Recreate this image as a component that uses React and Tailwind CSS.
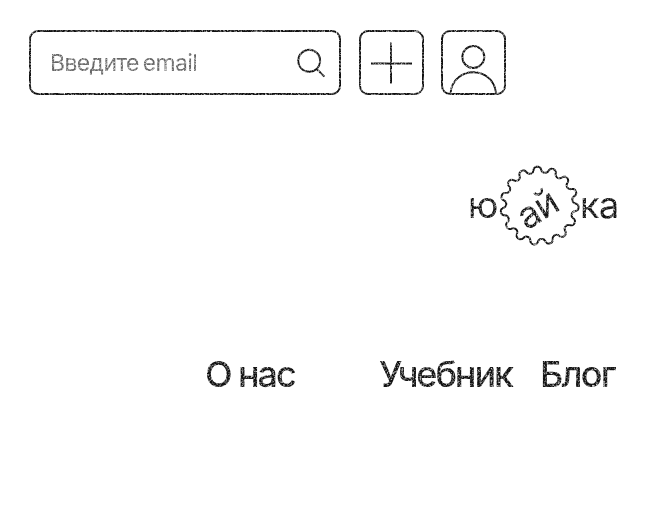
const TEETH = 15;

// Closed wavy outline of the cog badge.
function cogPath(cx, cy, radius, depth, phase) {
  const points = [];
  const steps = 600;
  for (let i = 0; i < steps; i++) {
    const t = (i / steps) * Math.PI * 2;
    const w = TEETH * (t - phase);
    const r = radius + depth * Math.cos(w);
    const a = t + 0.018 * Math.sin(w * 2);
    points.push(`${(cx + r * Math.cos(a)).toFixed(2)} ${(cy + r * Math.sin(a)).toFixed(2)}`);
  }
  return `M${points.join('L')}Z`;
}

const cog = cogPath(40.5, 40.7, 36.2, 2.9, (-93.4 * Math.PI) / 180);

function InkFilter() {
  return (
    <svg width="0" height="0" className="absolute" aria-hidden="true">
      <filter id="ink" x="0" y="0" width="100%" height="100%" colorInterpolationFilters="sRGB">
        <feTurbulence type="fractalNoise" baseFrequency="0.55" numOctaves="3" seed="4" result="noise" />
        <feColorMatrix in="noise" type="matrix" values="0 0 0 0 0  0 0 0 0 0  0 0 0 0 0  2.1 0 0 0 -0.18" result="mask" />
        <feComposite in="SourceGraphic" in2="mask" operator="in" />
      </filter>
    </svg>
  );
}

function Search() {
  return (
    <label className="mr-px flex h-[65px] w-[312px] items-center justify-between rounded-[9px] border-2 border-[#111] pl-[19px] pr-[12px]">
      <span className="pt-0.5 text-[23px] leading-none tracking-[-0.62px] [word-spacing:-2px] text-[#666]">Введите email</span>
      <svg width="32" height="32" viewBox="0 0 32 32" fill="none" stroke="#111" strokeWidth="1.9">
        <circle cx="14.2" cy="13.8" r="11" />
        <path d="M21.8 22L29.4 29.7" />
      </svg>
    </label>
  );
}

function Logo() {
  return (
    <div className="flex h-[82px] items-center text-[36px] leading-none text-[#111]">
      <span className="w-[31px] pb-0.5">ю</span>
      <div className="grid h-[82px] w-[81px] shrink-0 place-items-center">
        <svg className="col-start-1 row-start-1" width="82" height="82" fill="none" stroke="#111" strokeWidth="2">
          <path d={cog} />
        </svg>
        <span className="col-start-1 row-start-1 -rotate-32 pr-2 text-[37px] tracking-[-1px]">ай</span>
      </div>
      <span className="pb-0.5 tracking-[-0.5px]">ка</span>
    </div>
  );
}

export default function App() {
  return (
    <main className="h-[513px] w-[650px] overflow-hidden bg-white font-['Inter','Liberation_Sans',sans-serif]">
      <InkFilter />
      <div className="h-full w-full [filter:url(#ink)]">
        <div className="flex gap-[17.5px] pl-[29px] pt-[30px]">
          <Search />
          <button className="-ml-[0.5px] flex h-[65px] w-[64.5px] items-center justify-center rounded-[9px] border-2 border-[#111]">
            <svg width="41" height="42" stroke="#111" strokeWidth="2">
              <path d="M20 0.5V41.5M0 21.5H41" />
            </svg>
          </button>
          <button className="h-[65px] w-[64.5px] rounded-[9px] border-2 border-[#111]">
            <svg width="60" height="61" fill="none" stroke="#111" strokeWidth="1.9">
              <circle cx="30.3" cy="25" r="11" />
              <path d="M7.5 62C9 33 51.5 33 53 62" />
            </svg>
          </button>
        </div>
        <div className="flex pl-[468px] pt-[70px]">
          <Logo />
        </div>
        <nav className="flex pl-[205px] pt-[107px] text-[36px] font-medium leading-[40px] tracking-[-2.1px] text-[#111]">
          <a className="w-[174px] shrink-0">О нас</a>
          <a className="w-[161px] shrink-0">Учебник</a>
          <a className="tracking-[-1.8px]">Блог</a>
        </nav>
      </div>
    </main>
  );
}
